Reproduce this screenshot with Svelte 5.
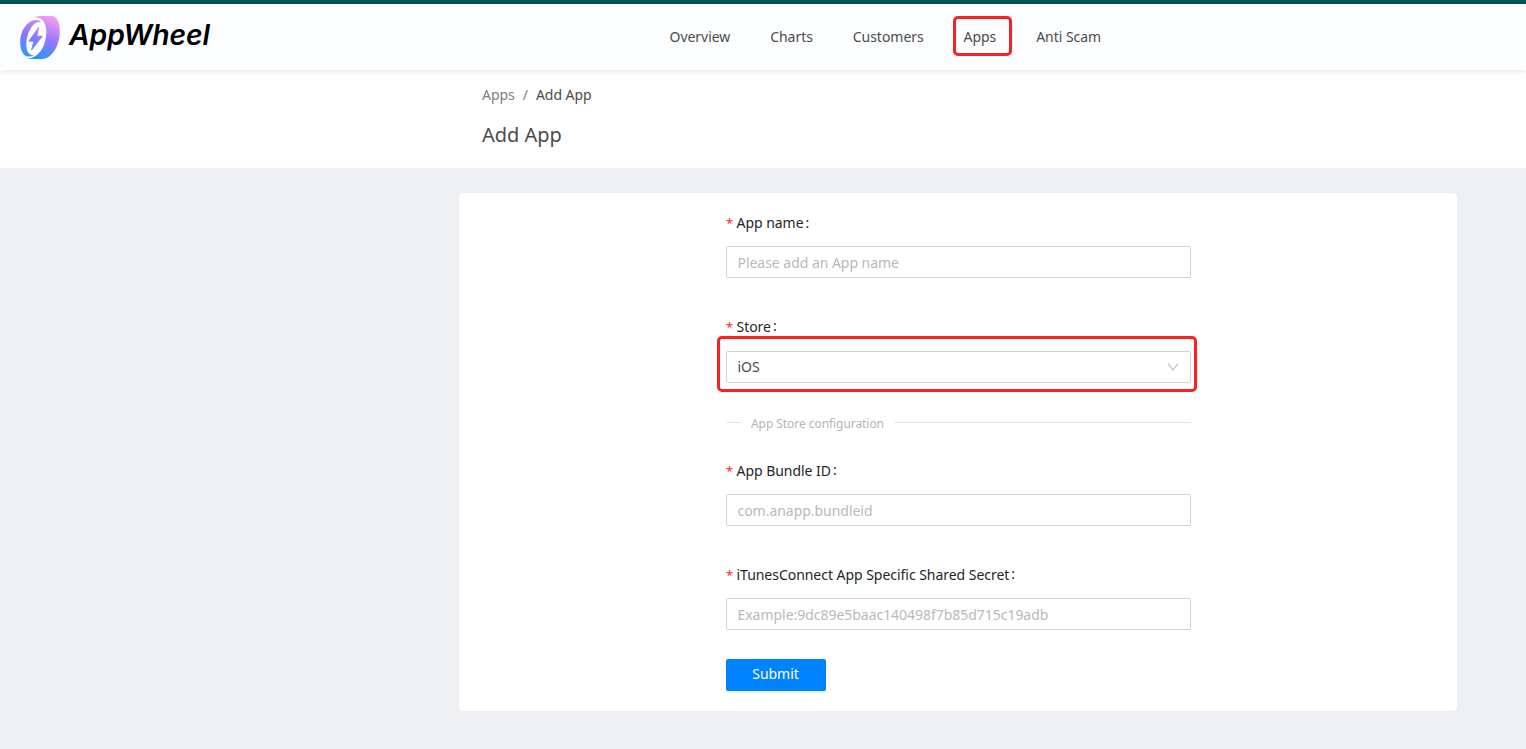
<script>
  const nav = ['Overview', 'Charts', 'Customers', 'Apps', 'Anti Scam'];
  let name = $state('');
  let bundle = $state('');
  let secret = $state('');
</script>

{#snippet label(text, raised = true)}
  <div class="label"><span class="star">*</span><span>{text}</span><span class="colon" class:raised>:</span></div>
{/snippet}

<div class="page">
  <header>
    <svg class="logo" width="200" height="50" viewBox="0 0 200 50">
      <defs>
        <linearGradient id="wheel" x1="0.65" y1="0" x2="0.35" y2="1">
          <stop offset="0" stop-color="#f49cf0" />
          <stop offset="0.5" stop-color="#9a78fa" />
          <stop offset="1" stop-color="#2594ff" />
        </linearGradient>
        <linearGradient id="rim" gradientUnits="userSpaceOnUse" x1="18" y1="5" x2="8" y2="43">
          <stop offset="0" stop-color="#c886f8" />
          <stop offset="0.45" stop-color="#8b78fc" />
          <stop offset="1" stop-color="#2a98ff" />
        </linearGradient>
      </defs>
      <path fill="url(#wheel)" d="M14 3.5C17 2.4 20 2 24 2h7C37 2 40 8 39.8 18C39.5 33 31 45 22 45H7C14 44.5 20.5 39.5 24 31C28.5 19 26.5 6 19 3.9Q16.5 3.2 14 3.5Z" />
      <path fill="url(#rim)" d="M16.5 6C7 6 .2 17 .2 28C.2 36 3 42 8 42.5Q11 43 14 41.3C9 41.6 6.3 37.5 6.3 31C6.3 20 12 9.5 17.5 8Q20 7.6 21.8 9.3Q19.5 6 16.5 6Z" />
      <path fill="url(#rim)" d="M18.6 13.5L8.8 27.2h5L11.6 36L22.3 22.3h-5.4Z" stroke="url(#rim)" stroke-width=".8" stroke-linejoin="round" />
      <text x="49" y="30.5" textLength="141" lengthAdjust="spacingAndGlyphs">AppWheel</text>
    </svg>
    <nav>
      {#each nav as item}
        <a class:marked={item === 'Apps'}>{item}</a>
      {/each}
    </nav>
  </header>
  <section class="heading">
    <div class="crumbs"><span>Apps</span><span class="slash">/</span><span class="current">Add App</span></div>
    <h1>Add App</h1>
  </section>
  <main>
    <form>
      {@render label('App name', false)}
      <input bind:value={name} placeholder="Please add an App name" />
      <div class="field store">
        {@render label('Store')}
        <div class="select">
          <span>iOS</span>
          <svg width="12" height="12" viewBox="0 0 12 12"><path d="M1.2 2.6L6 9.1L10.8 2.6" fill="none" stroke="#bcbcbc" stroke-width="1.1" /></svg>
        </div>
      </div>
      <div class="divider"><span>App Store configuration</span></div>
      {@render label('App Bundle ID')}
      <input bind:value={bundle} placeholder="com.anapp.bundleid" />
      <div class="field">
        {@render label('iTunesConnect App Specific Shared Secret')}
        <input bind:value={secret} placeholder="Example:9dc89e5baac140498f7b85d715c19adb" />
      </div>
      <button type="button">Submit</button>
    </form>
  </main>
</div>

<style>
  :global(body) { background: #eeeff3; }
  .page, input, button { font: 14px/22px "Noto Sans", sans-serif; letter-spacing: -.035px; }
  .page { height: 749px; overflow: hidden; color: #4b4b4b; }
  header {
    position: relative; height: 70px; box-sizing: border-box; display: flex;
    border-top: 4px solid #005257; background: #fcfdff;
    box-shadow: 0 1px 6px rgba(0, 0, 0, .12);
  }
  .logo { margin: 10px 0 0 20px; flex: none; }
  .logo text { font: italic 600 28px "Inter", sans-serif; fill: #000; }
  nav { display: flex; gap: 39.9px; margin: 22px 0 0 449.5px; white-space: nowrap; }
  nav a { position: relative; height: 22px; }
  .marked::after {
    content: ""; position: absolute; inset: -10.5px -15.5px -8px -10.5px;
    border: 3px solid #fb2020; border-radius: 5px;
  }
  .heading { height: 98px; background: #fff; box-sizing: border-box; padding: 14px 0 0 482px; }
  .crumbs { display: flex; color: #808080; }
  .slash { margin: 0 8px; }
  .current { color: #4b4b4b; }
  h1 { margin: 13px 0 0; font-size: 20px; line-height: 32px; font-weight: 400; }
  main {
    margin: 25px 0 0 459px; width: 998px; height: 518px; box-sizing: border-box;
    padding: 19px 266px 0 267px; background: #fff; border-radius: 4px;
  }
  form { display: flex; flex-direction: column; }
  .label { display: flex; height: 22px; margin-bottom: 12px; color: #262626; white-space: nowrap; }
  .star { width: 10.5px; color: #ff2438; font: 13px/22px "Noto Sans", sans-serif; }
  .colon { margin-left: 2px; }
  .raised { line-height: 20px; }
  input, .select {
    height: 32px; box-sizing: border-box; width: 100%; border: 1px solid #d3d3d3;
    border-radius: 2px; padding: 0 10.5px; background: #fff; outline: 0; color: #4b4b4b;
  }
  input::placeholder { color: #b9b9b9; opacity: 1; }
  .field { margin-top: 38px; }
  .store { position: relative; }
  .store .label { margin-bottom: 13px; }
  .store::after {
    content: ""; position: absolute; inset: 20px -6px -9px -9px;
    border: 3px solid #fb2020; border-radius: 5px; pointer-events: none;
  }
  .select { display: flex; justify-content: space-between; align-items: center; padding-right: 11px; }
  .divider {
    display: flex; align-items: center; height: 20px; margin: 29px 0 28px;
    font-size: 12px; color: #b5b5b5; white-space: nowrap;
  }
  .divider span { padding-top: 3px; letter-spacing: -.06px; }
  .divider::before, .divider::after { content: ""; height: 1px; background: #e4e4e4; }
  .divider::before { width: 15px; margin-right: 10px; }
  .divider::after { flex: 1; margin-left: 10px; }
  button {
    width: 100px; height: 32px; margin-top: 29px; padding: 0 1px 2px 0; border: 0; border-radius: 2px;
    color: #fff; background: #0083ff; box-shadow: 0 2px 0 rgba(0, 0, 0, .04);
  }
</style>
